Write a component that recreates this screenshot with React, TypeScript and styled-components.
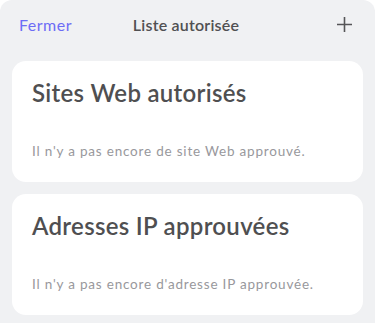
import React from "react";
import styled, { createGlobalStyle } from "styled-components";

const GlobalStyle = createGlobalStyle`
  html, body {
    margin: 0;
    padding: 0;
    background: #ffffff;
  }
  body {
    font-family: Lato, "Noto Sans", sans-serif;
    -webkit-font-smoothing: antialiased;
  }
`;

const Sheet = styled.div`
  width: 375px;
  height: 323px;
  box-sizing: border-box;
  background: #f0f1f3;
  border-radius: 12px 12px 0 0;
  padding: 0 12px 8px;
  display: flex;
  flex-direction: column;
  overflow: hidden;
`;

const Toolbar = styled.div`
  height: 50px;
  display: grid;
  grid-template-columns: 1fr auto 1fr;
  align-items: center;
  padding: 0 10px 0 7px;
  margin-bottom: 12px;
`;

const CloseButton = styled.button`
  justify-self: start;
  border: 0;
  background: none;
  padding: 0;
  font: inherit;
  font-size: 16px;
  letter-spacing: 0.5px;
  color: #6c6cf6;
  cursor: pointer;
`;

const Title = styled.div`
  font-size: 16px;
  font-weight: 600;
  letter-spacing: 0.2px;
  color: #505052;
`;

const AddButton = styled.button`
  justify-self: end;
  border: 0;
  background: none;
  padding: 0;
  width: 17px;
  height: 17px;
  display: flex;
  align-items: center;
  justify-content: center;
  color: #555557;
  cursor: pointer;
`;

const Cards = styled.div`
  display: flex;
  flex-direction: column;
  gap: 12px;
`;

const Card = styled.section`
  background: #ffffff;
  border-radius: 14px;
  height: 121px;
  box-sizing: border-box;
  padding: 16px 20px 0;
  display: flex;
  flex-direction: column;
`;

const CardTitle = styled.h2`
  margin: 0;
  font-size: 24px;
  line-height: 32px;
  font-weight: 600;
  letter-spacing: 0.3px;
  color: #4f4f51;
`;

const EmptyText = styled.p`
  margin: 33px 0 0;
  font-size: 13.5px;
  line-height: 18px;
  letter-spacing: 0.8px;
  color: #98989c;
`;

const PlusIcon = () => (
  <svg width="17" height="17" viewBox="0 0 17 17" fill="none">
    <path d="M8.5 1v15M1 8.5h15" stroke="currentColor" strokeWidth="1.6" />
  </svg>
);

const sections = [
  { title: "Sites Web autorisés", empty: "Il n'y a pas encore de site Web approuvé." },
  { title: "Adresses IP approuvées", empty: "Il n'y a pas encore d'adresse IP approuvée." },
];

export default function App() {
  return (
    <>
      <GlobalStyle />
      <Sheet>
        <Toolbar>
          <CloseButton>Fermer</CloseButton>
          <Title>Liste autorisée</Title>
          <AddButton aria-label="Ajouter">
            <PlusIcon />
          </AddButton>
        </Toolbar>
        <Cards>
          {sections.map((s) => (
            <Card key={s.title}>
              <CardTitle>{s.title}</CardTitle>
              <EmptyText>{s.empty}</EmptyText>
            </Card>
          ))}
        </Cards>
      </Sheet>
    </>
  );
}
